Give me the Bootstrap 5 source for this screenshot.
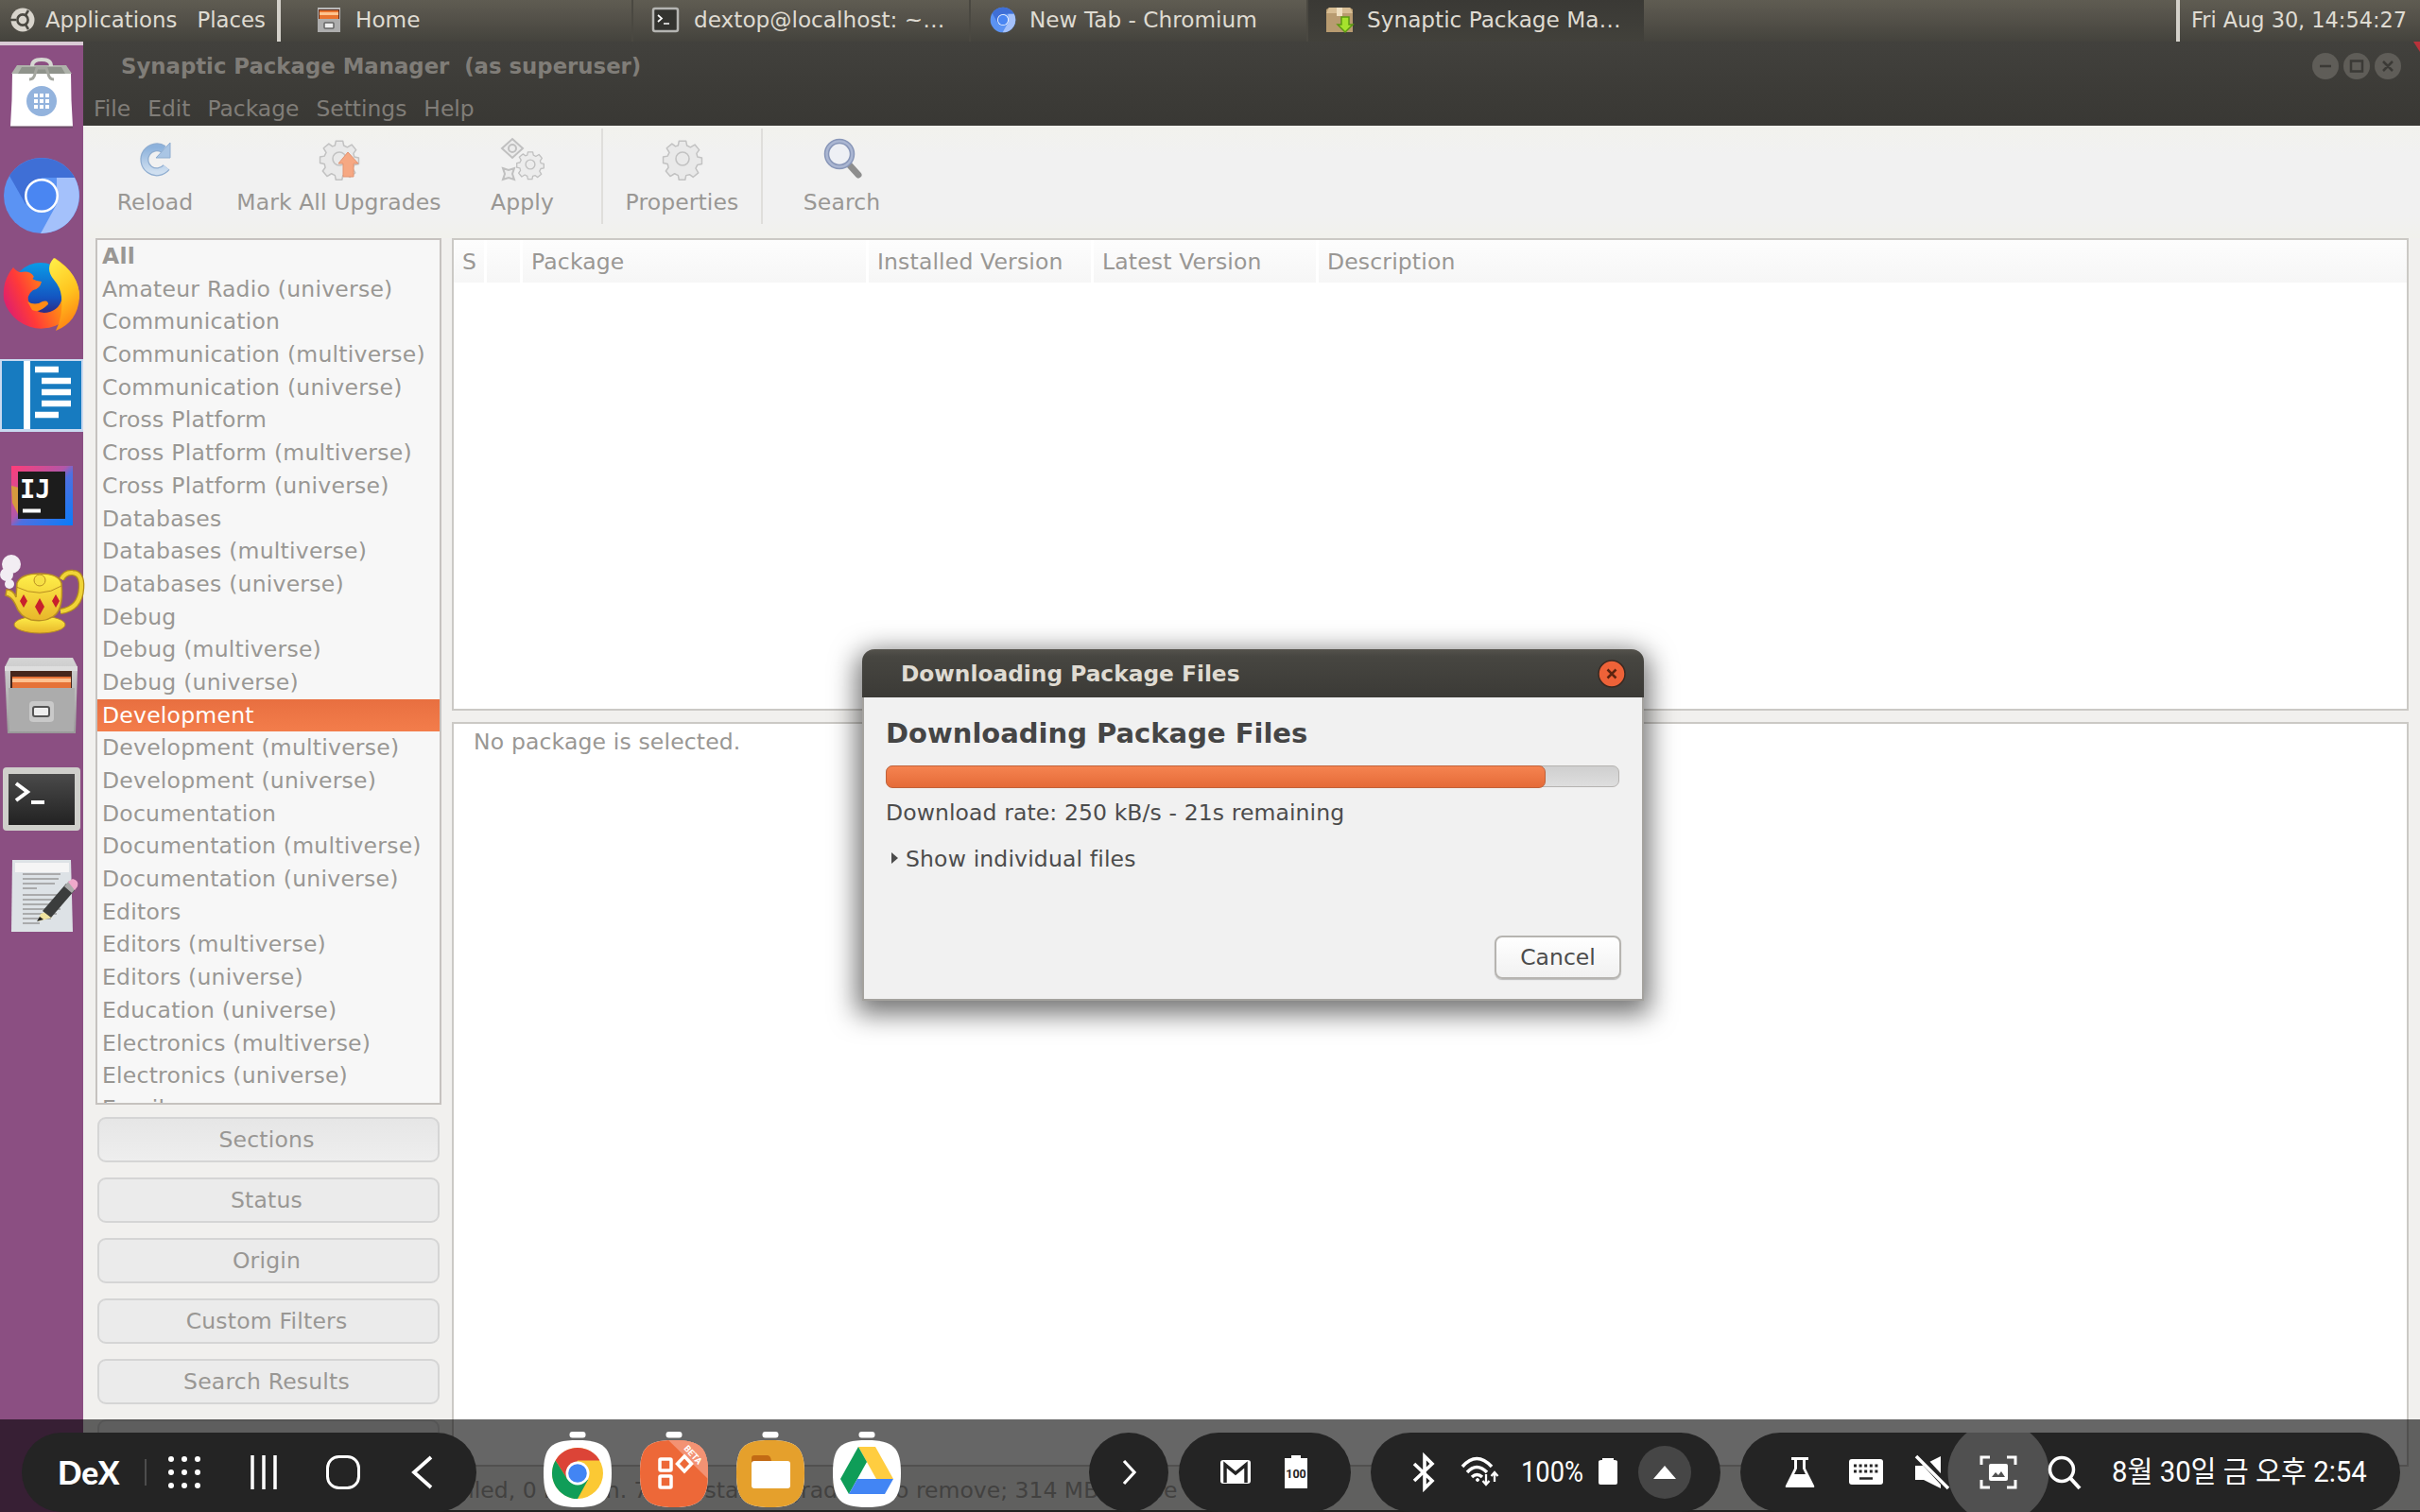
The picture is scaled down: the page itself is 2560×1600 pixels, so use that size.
<!DOCTYPE html>
<html lang="en">
<head>
<meta charset="utf-8">
<title>Synaptic Package Manager</title>
<link href="https://cdn.jsdelivr.net/npm/bootstrap@5.3.0/dist/css/bootstrap.min.css" rel="stylesheet">
<style>
html,body{width:2560px;height:1600px;overflow:hidden}
body{font-family:"DejaVu Sans",sans-serif;font-size:23.5px;line-height:34px;color:#999794;background:#f1f0ee;margin:0}
svg{display:block;flex:none;overflow:visible}
.panel-top{height:44px;background:linear-gradient(#5f5c52,#55524a 40%,#44433d);color:#dfdbd2;font-size:23.2px;flex:none}
.panel-top>div{height:42px;white-space:pre;flex:none}
.panel-top>.task-item,.panel-top>.sep-bar{height:44px}
.panel-apps{width:293px;font-size:22.8px}
.panel-clock{width:254px;padding-left:12px;font-size:22.4px}
.sep-bar{width:4px;background:#d4d1ca;flex:none}
.task-home{width:375px;padding-left:37px}
.task-item{width:357px;padding-left:20px;padding-bottom:2px;border-left:2px solid #4a4841}
.task-item.first{margin-left:-4px}
.task-item.on{background:linear-gradient(#3a3935,#42413b);padding-left:18px}
.tlabel{padding-left:14px}
.task-item.first .tlabel{padding-left:16px}
.dock-bar{width:88px;background:#8b4f82;border-top:4px solid #d9cbd6;height:1556px;flex:none}
.win-head{height:89px;background:linear-gradient(#42413d,#3c3b37 60%,#393834);color:#807d78}
.corner-tip{right:0;top:44px}
.win-title{height:50px;padding:1px 19px 0 40px;font-size:22.8px;font-weight:700;white-space:pre}
.menu-row{height:39px;padding-left:11px;padding-top:3px;gap:18px;font-size:23.4px}
.tool-row{height:119px;background:linear-gradient(#f2f2ed,#f1f1f1 25%,#f1f1f1 80%,#f1f1ec)}
.tool-item{padding-top:13px;height:104px;text-align:center;white-space:nowrap;letter-spacing:.1px}
.tool-item svg{margin:0 auto 7px}
.tool-sep{width:2px;height:101px;background:#dfdedb;margin-top:3px}
.tw1{width:152px}.tw2{width:237px}.tw3{width:151px}.tw4{width:167px}
.left-col{width:366px;margin-left:13px;flex:none}
.tree-box{height:917px;border:2px solid #c6c2bf;background:#f7f7f7;overflow:hidden;white-space:nowrap;flex:none;letter-spacing:.23px;margin-bottom:13px}
.tree-box div{height:34.7px;line-height:35px;padding-left:5px}
.tree-box .sel{background:linear-gradient(#e86f40,#f37d4b);color:#fff}
.side-btn{display:block;width:362px;height:48px;margin:0 2px 16px;border:2px solid #d5d5d5;border-radius:9px;background:#ebebeb;color:#999794;font-size:23.5px;line-height:43px;padding:0 4px 0 0;letter-spacing:.2px;text-align:center;flex:none}
.side-btn.on{background:linear-gradient(#e6e6e6,#eee)}
.right-col{width:2070px;margin-left:11px;flex:none}
.pkg-box{height:500px;border:2px solid #cbc9c5;background:#fff}
.pkg-head{height:45px;background:linear-gradient(#fdfdfd,#f6f6f6);letter-spacing:.15px}
.pkg-head div{border-right:3px solid #fff;padding-left:9px;padding-top:6px}
.c1{width:35px}.c2{width:38px}.c3{width:366px}.c4{width:238px}.c5{width:238px}
.desc-box{height:788px;border:2px solid #cbc9c5;background:#fff;margin-top:12px;padding:2px 0 0 21px;letter-spacing:.15px}
.stat-line{height:49px;padding:8px 0 0 350px;white-space:pre;border-bottom:3px solid #55534e;color:#a5a3a0}
.dlg{position:absolute;left:912px;top:687px;width:827px;height:372px;border-radius:14px 14px 0 0;background:#f1f1f1;border:2px solid #a4a29e;border-top:0;color:#4c4c4c;box-shadow:0 8px 28px 6px rgba(0,0,0,.55);white-space:nowrap}
.dlg-title{height:51px;margin:0 -2px;border-radius:13px 13px 0 0;background:linear-gradient(#55534d,#474641 15%,#3b3a36);color:#dfdbd2;font-weight:700;font-size:23.3px;padding:0 19px 0 41px}
.dlg-body{padding:20px 22px 0 23px}
.dlg-h{font-size:29px;font-weight:700;height:36px;line-height:37px;color:#454545}
.dlg-prog{height:23px;margin-top:16px;border:1.5px solid #b5b3b0;border-radius:7px;background:linear-gradient(#cfcfcf,#dedede);width:776px}
.dlg-prog .progress-bar{background:linear-gradient(#f58350,#e56b38);border:1.5px solid #c0623b;border-radius:7px;margin:-1.5px 0 -1.5px -1.5px}
.dlg-rate{margin-top:10px;letter-spacing:.1px}
.dlg-more{margin-top:15px;letter-spacing:.15px}
.dlg-foot{margin-top:64px}
.dlg-cancel{width:134px;height:46px;border:2px solid #b6b4b0;border-radius:8px;background:linear-gradient(#fff,#f1f1f1);font-size:23.5px;color:#4c4c4c;padding:0;line-height:40px;box-shadow:0 1px 1px #bbb}
.dexbar{position:absolute;left:0;top:1502px;width:2560px;height:98px;background:rgba(0,0,0,.6);padding-top:14px;color:#fff;font-family:Roboto,"Noto Sans CJK KR",sans-serif}
.pillbox{height:84px;border-radius:42px;background:#242424;flex:none;white-space:nowrap;overflow:hidden}
.p1{width:481px;margin-left:23px}.p2{width:84px;margin-left:184px}.p3{width:182px;margin-left:11px;padding-left:28px}.p4{width:370px;margin-left:21px;padding-left:26px}.p5{width:698px;margin-left:21px;padding-left:28px}
.dexword{font-family:Lato,sans-serif;font-weight:900;font-size:33.5px;width:92px;margin-left:38px}
.vbar{width:2px;height:28px;background:#4d4d4d;margin-right:-2px}
.apps{width:408px;margin-left:56px}
.pct{font-size:31px;width:82px;padding-left:13px}
.pct span,.when span{display:inline-block;transform-origin:0 50%}
.pct span{transform:scaleX(.88)}
.when{font-family:Roboto,"Noto Sans CJK KR",sans-serif;font-size:31px;padding-left:15px}
.when span{transform:scaleX(.945)}
</style>
<script src="https://cdn.jsdelivr.net/npm/bootstrap@5.3.0/dist/js/bootstrap.bundle.min.js"></script>
</head>
<body>
<svg width="0" height="0" class="position-absolute"><defs>
<linearGradient id="gmetal" x2="0" y2="1"><stop stop-color="#d5d5d5"/><stop offset="1" stop-color="#999"/></linearGradient>
<linearGradient id="gdark" x2="0" y2="1"><stop stop-color="#4a4a4a"/><stop offset="1" stop-color="#222"/></linearGradient>
<linearGradient id="gfox" x1="0" y1=".6" x2="1" y2=".2"><stop stop-color="#e0206c"/><stop offset=".25" stop-color="#ff3a38"/><stop offset=".6" stop-color="#ff8a14"/><stop offset="1" stop-color="#ffe12e"/></linearGradient>
<linearGradient id="gfox2" x2=".3" y2="1"><stop stop-color="#fff14a"/><stop offset=".6" stop-color="#ffc41e"/><stop offset="1" stop-color="#ff8a14"/></linearGradient>
<linearGradient id="gfoxb" x2="0" y2="1"><stop stop-color="#0a9be8"/><stop offset=".6" stop-color="#1454c0"/><stop offset="1" stop-color="#3a1462"/></linearGradient>
<linearGradient id="glamp" x2="0" y2="1"><stop stop-color="#fff04a"/><stop offset="1" stop-color="#e8b62a"/></linearGradient>
<linearGradient id="gblue" x2="0" y2="1"><stop stop-color="#8db2dc"/><stop offset="1" stop-color="#cfdff0"/></linearGradient>
<linearGradient id="gij" x2="1" y2="1"><stop stop-color="#ff3d78"/><stop offset=".45" stop-color="#b257a8"/><stop offset=".55" stop-color="#4f70e0"/><stop offset="1" stop-color="#087cfa"/></linearGradient>
<g id="cog"><path stroke-linejoin="round" d="M-4-19h8l1 5 4 2 5-3 5 6-3 4 1 4 5 1v7l-5 1-2 4 3 5-6 5-4-3-4 1-1 5h-7l-1-5-4-2-5 3-5-6 3-4-1-4-5-1v-7l5-1 2-4-3-5 6-5 4 3 3-1z" transform="translate(0 -1) scale(.93)"/><circle r="7"/></g>
<g id="chromium"><circle r="40" fill="#5b93f3"/><path d="M-34-21A40 40 0 0 1 35-19H0L-17 9z" fill="#3f6fd6"/><path d="M35-19A40 40 0 0 1-1 40L16 9V-19z" fill="#a4c1fb"/><circle r="18" fill="#fff"/><circle r="15.5" fill="#4a86f2"/></g>
</defs></svg>

<nav class="panel-top d-flex">
  <div class="panel-apps d-flex align-items-center"><svg width="48" height="44" viewBox="0 0 48 44"><circle cx="24" cy="22" r="12.5" fill="#d8d4cc"/><circle cx="24" cy="22" r="5.6" fill="none" stroke="#4a4841" stroke-width="2.6"/><path d="M11 22h6M30 12l-3 5M30 32l-3-5" stroke="#4a4841" stroke-width="2.5"/></svg><span>Applications</span><span class="ms-auto pe-2 me-1">Places</span></div>
  <div class="sep-bar"></div>
  <div class="task-home d-flex align-items-center"><svg width="28" height="28" viewBox="0 0 28 28"><path d="M2 1h24v26H2z" fill="#b9b9b9"/><path d="M3 3h22v11H3z" fill="#5a2c1c"/><path d="M4 4h20v9H4z" fill="#e9742f"/><path d="M4 6h20v3H4z" fill="#ffc48f"/><path d="M2 13h24v14H2z" fill="#adadad"/><rect x="9" y="17" width="10" height="6" rx="1" fill="#eee" stroke="#666" stroke-width="1.500"/></svg><span class="tlabel">Home</span></div>
  <div class="task-item first d-flex align-items-center"><svg width="28" height="26" viewBox="0 0 28 26"><rect x="1" y="1" width="26" height="24" rx="2" fill="#33332f" stroke="#b5b5b2" stroke-width="2.5"/><path d="M6 8l4 3.500-4 3.500M12 17h6" stroke="#fff" stroke-width="1.700" fill="none"/></svg><span class="tlabel">dextop@localhost: ~…</span></div>
  <div class="task-item d-flex align-items-center"><svg width="28" height="28" viewBox="-42 -42 84 84"><use href="#chromium"/></svg><span class="tlabel">New Tab - Chromium</span></div>
  <div class="task-item on d-flex align-items-center"><svg width="30" height="28" viewBox="0 0 30 28"><path d="M1 3l3-2h22l3 2v24H1z" fill="#b89b70"/><path d="M1 7h28M4 1h22l3 6H1z" fill="#d7bd93"/><path d="M12 1h6v9h-6z" fill="#efdfc0"/><path d="M17 11h8v8h4l-8 8-8-8h4z" fill="#a6e22d" stroke="#5c9a10" stroke-width="1.500"/></svg><span class="tlabel">Synaptic Package Ma…</span></div>
  <div class="sep-bar ms-auto"></div>
  <div class="panel-clock d-flex align-items-center">Fri Aug 30, 14:54:27</div>
</nav>

<div class="d-flex">
<aside class="dock-bar">
 <svg width="88" height="106" viewBox="0 48 88 106"><path d="M12 78l6-9h52l6 9z" fill="#aeb2aa"/><path d="M19 78l4-7h42l4 7z" fill="#8f938b"/><path d="M13 78h62q0 28 2 56H11q2-28 2-56z" fill="#fff"/><path d="M11 134.500h66" stroke="#6c4a66" stroke-width="2"/><path d="M34 70q0-7 10-7t10 7" fill="none" stroke="#d6d8d2" stroke-width="4"/><path d="M31 84q5 0 6-6l2-6h10l2 6q1 6 6 6" fill="none" stroke="#a4a69f" stroke-width="3"/><circle cx="44" cy="107" r="16" fill="#93b3dd"/><path d="M36 101h4m2 0h4m2 0h4M36 107h4m2 0h4m2 0h4M36 113h4m2 0h4m2 0h4" stroke="#fff" stroke-width="4"/></svg>
 <svg width="88" height="106" viewBox="0 154 88 106"><use href="#chromium" x="44" y="207"/></svg>
 <svg width="88" height="106" viewBox="0 258 88 106"><circle cx="43" cy="307" r="31" fill="url(#gfoxb)"/><path d="M14 281q4 5 8 5 10-2 14 5-5 3 8 5-2 8-9 9-8 6-4 14 8 13 22 9 14-5 13-22 0-14-9-24-2-8 1-11 26 17 26 41a41 41 0 0 1-80 3q-2-20 10-34z" fill="url(#gfox)"/><path d="M57 271q27 17 27 42-2 26-25 35 8-16 6-36-1-10-8-18-10-12 0-23z" fill="url(#gfox2)"/><path d="M29 317q8 5 16 0 6-2 6 3-10 10-17 6z" fill="#ff8a14"/></svg>
 <svg width="88" height="106" viewBox="0 366 88 106"><path d="M0 380h88v77H0z" fill="#c9d9f0"/><path d="M2 382h23v72H2zM32 382h54v72H32z" fill="#177bc0"/><path d="M25 382h7v72h-7z" fill="#fff"/><path d="M37 391h25M44 403h31M44 415h31M44 427h31M37 439h25" stroke="#fff" stroke-width="6.500"/></svg>
 <svg width="88" height="106" viewBox="0 472 88 106"><path d="M12 493h65v63H12z" fill="url(#gij)"/><path d="M12 514l8 2v30l-7-14z" fill="#d69a3e"/><path d="M19 499h50v50H19z" fill="#1c1c1c"/><text x="21" y="527" font-family="DejaVu Sans Mono" font-weight="700" font-size="27" fill="#fff">IJ</text><path d="M24 540.500h19" stroke="#fff" stroke-width="4"/></svg>
 <svg width="88" height="106" viewBox="0 578 88 106"><path d="M65 613q4-8 12-7 10 1 9 16-1 22-22 25" fill="none" stroke="#b28d1c" stroke-width="6.500"/><path d="M65 613q4-8 12-7 10 1 9 16-1 22-22 25" fill="none" stroke="#f0d437" stroke-width="4"/><ellipse cx="42" cy="661" rx="27" ry="9" fill="url(#glamp)" stroke="#b98e22"/><path d="M7 624q7 0 10 8l1-15q4-10 24-10t23 10q3 32-12 37-6 4-20 2-12-3-17-17-4-8-10-9z" fill="url(#glamp)" stroke="#b98e22" stroke-width="1.500"/><path d="M17 621q26 13 48-1" fill="none" stroke="#b98e22"/><circle cx="42" cy="614" r="6" fill="#f6e045" stroke="#b98e22"/><path d="M25 629l4 7-4 7-4-7zM42 633l5 9-5 9-5-9zM59 629l4 7-4 7-4-7z" fill="#c8202c"/><g fill="#f2edf3"><circle cx="12" cy="597" r="10"/><circle cx="7" cy="608" r="7"/><circle cx="10" cy="618" r="5"/></g></svg>
 <svg width="88" height="108" viewBox="0 684 88 108"><path d="M10 696h67l5 10-2 70H8L5 706z" fill="url(#gmetal)"/><path d="M5 705h77v5H5z" fill="#dedede"/><path d="M11 710h65v20H11z" fill="#46261c"/><path d="M13 716h62v12H13z" fill="#e57238"/><path d="M13 718h62v4H13z" fill="#ffc08f"/><path d="M9 728h70l-1 46H10z" fill="#acacac"/><rect x="31" y="742" width="26" height="22" rx="4" fill="#c9c9c9"/><rect x="35" y="748" width="17" height="10" rx="2" fill="#eee" stroke="#555" stroke-width="2"/></svg>
 <svg width="88" height="104" viewBox="0 792 88 104"><rect x="3" y="812" width="82" height="67" rx="4" fill="#cfcfcb"/><path d="M9 819h70v54H9z" fill="url(#gdark)"/><path d="M17 829l12 9-12 9M33 849h14" fill="none" stroke="#fff" stroke-width="4"/></svg>
 <svg width="88" height="106" viewBox="0 896 88 106"><path d="M13 910h62l2 76H12z" fill="#dde2e6"/><path d="M16 913h57v10H16z" fill="#f5f5f5"/><path d="M24 925h40M24 930h38M24 935h34M24 940h15M24 947h40M24 952h36M24 957h32M24 962h40M24 967h36M24 972h30M24 977h18" stroke="#999" stroke-width="1.500"/><path d="M43 967l8-3 4 7-15 4z" fill="#efe3a0"/><path d="M45 964L70 935l9 7-25 29z" fill="#3b3d3d"/><path d="M68 938l5-6 8 7-5 6z" fill="#aaa"/><path d="M72 933l5-3q7 2 5 8l-3 4z" fill="#efa9cb"/><path d="M39 975l3-5 4 3z" fill="#222"/></svg>
</aside>

<main style="width:2472px">
 <header class="win-head">
  <svg class="corner-tip position-absolute" width="7" height="11" viewBox="0 0 7 11"><path d="M0 0h7v11z" fill="#b8323a"/></svg>
  <div class="win-title d-flex align-items-center"><span>Synaptic Package Manager  (as superuser)</span>
   <svg class="ms-auto" width="96" height="30" viewBox="0 0 96 30"><g fill="#5f5d58"><circle cx="15" cy="15" r="14"/><circle cx="48" cy="15" r="14"/><circle cx="81" cy="15" r="14"/></g><g fill="none" stroke="#3b3a36" stroke-width="2.500"><path d="M9 15h12M42 9.500h12v11H42zM76 10l10 10M86 10L76 20"/></g></svg></div>
  <div class="menu-row d-flex align-items-center"><span>File</span><span>Edit</span><span>Package</span><span>Settings</span><span>Help</span></div>
 </header>
 <div class="tool-row d-flex">
  <div class="tool-item tw1"><svg width="44" height="44" viewBox="-22 -22 44 44"><path d="M12 9A13 13 0 1 1 9-10" fill="none" stroke="#8fadd0" stroke-width="9"/><path d="M12 9A13 13 0 1 1 9-10" fill="none" stroke="url(#gblue)" stroke-width="6.500"/><path d="M16-17V-1H1z" fill="#a9c5e4" stroke="#8fadd0"/></svg>Reload</div>
  <div class="tool-item tw2"><svg width="44" height="44" viewBox="-22 -22 44 44"><use href="#cog" fill="#e9e9e9" stroke="#c2c2c2" stroke-width="1.600"/><path d="M9-7l11 12h-5v14H4V5h-5z" fill="#f6a883" stroke="#e39370"/></svg>Mark All Upgrades</div>
  <div class="tool-item tw3"><svg width="48" height="44" viewBox="-24 -22 48 44"><g fill="#ececec" stroke="#c0c0c0"><use href="#cog" transform="translate(8 6) scale(.7)" stroke-width="2"/><path d="M-11-21l11 10-11 10-11-10z" stroke-width="2"/><circle cx="-11" cy="-11" r="4" stroke-width="2"/><path d="M-21 10l6 2 6-2-2 6 2 6-6-2-6 2 2-6z" stroke-width="2"/></g></svg>Apply</div>
  <div class="tool-sep ms-2"></div>
  <div class="tool-item tw4"><svg width="44" height="44" viewBox="-22 -22 44 44"><use href="#cog" fill="#e9e9e9" stroke="#c2c2c2" stroke-width="1.600"/></svg>Properties</div>
  <div class="tool-sep"></div>
  <div class="tool-item tw4"><svg width="44" height="44" viewBox="-22 -22 44 44"><path d="M7 6l10 11" stroke="#8e8e8e" stroke-width="7" stroke-linecap="round"/><circle cx="-3" cy="-5" r="13.500" fill="#eef0f5" stroke="#8896b8" stroke-width="5.500"/><circle cx="-3" cy="-5" r="13.500" fill="none" stroke="#aab6d2" stroke-width="2.500"/></svg>Search</div>
 </div>
 <div class="d-flex">
  <section class="left-col d-flex flex-column">
   <div class="tree-box"><div class="fw-bold">All</div><div>Amateur Radio (universe)</div><div>Communication</div><div>Communication (multiverse)</div><div>Communication (universe)</div><div>Cross Platform</div><div>Cross Platform (multiverse)</div><div>Cross Platform (universe)</div><div>Databases</div><div>Databases (multiverse)</div><div>Databases (universe)</div><div>Debug</div><div>Debug (multiverse)</div><div>Debug (universe)</div><div class="sel">Development</div><div>Development (multiverse)</div><div>Development (universe)</div><div>Documentation</div><div>Documentation (multiverse)</div><div>Documentation (universe)</div><div>Editors</div><div>Editors (multiverse)</div><div>Editors (universe)</div><div>Education (universe)</div><div>Electronics (multiverse)</div><div>Electronics (universe)</div><div>Email</div></div>
   <button class="side-btn on">Sections</button><button class="side-btn">Status</button><button class="side-btn">Origin</button><button class="side-btn">Custom Filters</button><button class="side-btn">Search Results</button><button class="side-btn mb-0">&nbsp;</button>
  </section>
  <section class="right-col">
   <div class="pkg-box"><div class="pkg-head d-flex"><div class="c1">S</div><div class="c2"></div><div class="c3">Package</div><div class="c4">Installed Version</div><div class="c5">Latest Version</div><div class="border-0">Description</div></div></div>
   <div class="desc-box">No package is selected.</div>
  </section>
 </div>
 <footer class="stat-line">installed, 0 broken. 7 to install/upgrade, 0 to remove; 314 MB will be used</footer>
</main>
</div>

<div class="dlg">
 <div class="dlg-title d-flex align-items-center"><span>Downloading Package Files</span><svg class="ms-auto" width="30" height="30" viewBox="-15 -15 30 30"><circle r="14" fill="#ee6238" stroke="#3a2a22" stroke-width="1.500"/><path d="M-4.500-4.500l9 9M4.500-4.500l-9 9" stroke="#5c2410" stroke-width="2.500"/></svg></div>
 <div class="dlg-body">
  <div class="dlg-h">Downloading Package Files</div>
  <div class="progress dlg-prog overflow-visible"><div class="progress-bar" style="width:90.3%"></div></div>
  <div class="dlg-rate">Download rate: 250 kB/s - 21s remaining</div>
  <div class="dlg-more d-flex align-items-center"><svg width="21" height="20" viewBox="0 0 21 20"><path d="M6 3l7 6-7 6z" fill="#4c4c4c"/></svg>Show individual files</div>
  <div class="dlg-foot text-end"><button class="dlg-cancel">Cancel</button></div>
 </div>
</div>

<div class="dexbar d-flex">
 <div class="pillbox p1 d-flex align-items-center"><span class="dexword">DeX</span><span class="vbar"></span>
  <svg width="84" height="84" viewBox="-42 -42 84 84" fill="#fff"><g id="dotrow"><circle cx="-14" r="3"/><circle r="3"/><circle cx="14" r="3"/></g><use href="#dotrow" y="-14"/><use href="#dotrow" y="14"/></svg>
  <svg width="84" height="84" viewBox="-42 -42 84 84"><path d="M-12-18v36M0-18v36M12-18v36" stroke="#fff" stroke-width="3.500"/></svg>
  <svg width="84" height="84" viewBox="-42 -42 84 84"><rect x="-16.500" y="-16.500" width="33" height="33" rx="12" fill="none" stroke="#fff" stroke-width="3"/></svg>
  <svg width="84" height="84" viewBox="-42 -42 84 84"><path d="M9-16L-9 0 9 16" fill="none" stroke="#fff" stroke-width="3.800"/></svg>
 </div>
 <div class="apps d-flex">
  <svg width="102" height="84" viewBox="-51 -42 102 84"><g id="capshape"><rect x="-8.500" y="-43" width="17" height="6.500" rx="3" fill="#fff"/><path id="blob" d="M0-34C28-34 36-26 36 1S28 37 0 37-36 29-36 1-28-34 0-34z" fill="#fff"/></g><circle r="27" cy="1" fill="#fbc934"/><g transform="translate(0 1)"><path d="M-23.400-13.500A27 27 0 0 1 23.400-13.500H0L-11 6z" fill="#dc4437"/><path d="M-23.400-13.500A27 27 0 0 0 0 27L11 7-11 6z" fill="#109d58"/><circle r="12.500" fill="#fff"/><circle r="9.800" fill="#4285f4"/></g></svg>
  <svg width="102" height="84" viewBox="-51 -42 102 84"><clipPath id="cb"><use href="#blob"/></clipPath><use href="#capshape"/><path d="M0-34C28-34 36-26 36 1S28 37 0 37-36 29-36 1-28-34 0-34z" fill="#ed6838"/><path d="M-9-37H37V8z" fill="#f39273" clip-path="url(#cb)"/><g fill="none" stroke="#fff" stroke-width="3.500"><rect x="-15" y="-14" width="12" height="12" rx="1"/><rect x="-15" y="4" width="12" height="12" rx="1"/><path d="M11-17l7.500 8L11-1 3.500-9z"/></g><text transform="translate(10 -25) rotate(48)" font-size="9.500" font-weight="700" fill="#fff">BETA</text></svg>
  <svg width="102" height="84" viewBox="-51 -42 102 84"><use href="#capshape"/><path d="M0-34C28-34 36-26 36 1S28 37 0 37-36 29-36 1-28-34 0-34z" fill="#e5a02c"/><path d="M-20-6v-9q0-3 3-3H-3q3 0 4 6z" fill="#c26a14"/><rect x="-20" y="-12" width="41" height="29" rx="3" fill="#fff"/></svg>
  <svg width="102" height="84" viewBox="-51 -42 102 84"><use href="#capshape"/><path d="M-9-27H9L28 7H10z" fill="#ffcd40"/><path d="M-9-27L0-11-19 23-28 7z" fill="#0f9d58"/><path d="M-10 7H28L19 23H-19z" fill="#4285f4"/></svg>
 </div>
 <div class="pillbox p2"><svg width="84" height="84" viewBox="-42 -42 84 84"><path d="M-5-12L6 0-5 12" fill="none" stroke="#fff" stroke-width="3.200"/></svg></div>
 <div class="pillbox p3 d-flex">
  <svg width="64" height="84" viewBox="-32 -42 64 84"><rect x="-16" y="-13" width="32" height="25" rx="3" fill="#fff"/><path d="M-11 11V-8L0 1 11-8v19" fill="none" stroke="#242424" stroke-width="3.500"/></svg>
  <svg width="64" height="84" viewBox="-32 -42 64 84"><path d="M-12-15h7v-3h10v3h7v32h-24z" fill="#fff"/><text y="6" text-anchor="middle" font-size="12.500" font-weight="700" fill="#242424">100</text></svg>
 </div>
 <div class="pillbox p4 d-flex align-items-center">
  <svg width="60" height="84" viewBox="-30 -42 60 84"><path d="M-10-9L9 9 1 17V-17l8 8L-10 9" fill="none" stroke="#fff" stroke-width="3.600"/></svg>
  <svg width="60" height="84" viewBox="-30 -42 60 84" fill="none" stroke="#fff" stroke-width="3.500"><path d="M-19-6q15-17 31 0M-14 0q10-11 21 0M-9 5q5.500-5 11 0"/><circle cx="-3" cy="8" r="1.500" fill="#fff" stroke-width="1"/><path d="M6 2v10M2.500 9L6 13l3.500-4M15 10V0M11.500 4L15 0l3.500 4" stroke-width="2.300"/></svg>
  <span class="pct"><span>100%</span></span>
  <svg width="46" height="84" viewBox="-23 -42 46 84"><path d="M-10-11q0-2 3-2h1v-2H6v2h1q3 0 3 2v22q0 2-2 2H-8q-2 0-2-2z" fill="#fff"/></svg>
  <svg width="74" height="84" viewBox="-37 -42 74 84"><circle r="28" fill="#464646"/><path d="M0-7L12 7h-24z" fill="#fff"/></svg>
 </div>
 <div class="pillbox p5 d-flex align-items-center">
  <svg width="70" height="84" viewBox="-35 -42 70 84"><path d="M-9-16H9v3H6v9l9 18q1 2-1 2H-14q-2 0-1-2L-6-4v-9h-3z" fill="#fff"/><path d="M-3-13h6V-4l3 6H-6l3-6z" fill="#242424"/></svg>
  <svg width="70" height="84" viewBox="-35 -42 70 84"><rect x="-18" y="-14" width="36" height="27" rx="3" fill="#fff"/><path d="M-13-7H13M-13-1H13" stroke="#242424" stroke-width="3" stroke-dasharray="3 2.600"/><path d="M-7 6.500H7" stroke="#242424" stroke-width="2.500"/></svg>
  <svg width="70" height="84" viewBox="-35 -42 70 84"><path d="M-18-7h7L9-17V17L-9 8h-9z" fill="#fff"/><path d="M-15-19L19 18" stroke="#242424" stroke-width="8"/><path d="M-17-17L17 17" stroke="#fff" stroke-width="3.500"/></svg>
  <svg width="70" height="84" viewBox="-35 -42 70 84"><circle r="53.500" fill="#505050"/><path d="M-18-8v-8h9M9-16h9v8M18 8v8H9M-9 16h-9V8" fill="none" stroke="#fff" stroke-width="3"/><rect x="-10" y="-9" width="20" height="18" rx="2" fill="#fff"/><path d="M-7 5l4-5 3 3 3-4 4 6" fill="#505050"/></svg>
  <svg width="70" height="84" viewBox="-35 -42 70 84"><circle cx="-3" cy="-3" r="12.500" fill="none" stroke="#fff" stroke-width="3.500"/><path d="M6 6l10 11" stroke="#fff" stroke-width="4"/></svg>
  <span class="when"><span>8월 30일 금 오후 2:54</span></span>
 </div>
</div>
</body>
</html>
